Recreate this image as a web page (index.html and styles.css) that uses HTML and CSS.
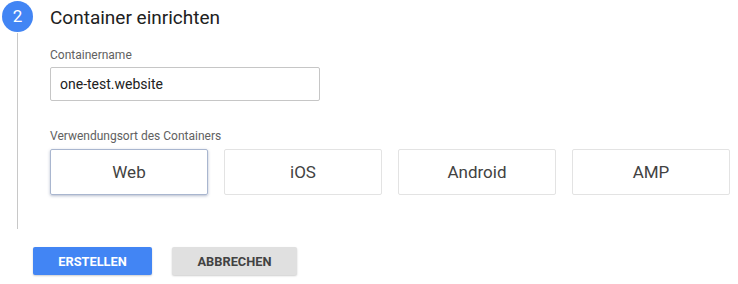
FILE: index.html
```html
<!DOCTYPE html>
<html lang="de">
<head>
<meta charset="utf-8">
<title>Container einrichten</title>
<link rel="stylesheet" href="styles.css">
</head>
<body>
<div class="page">
  <section class="step">
    <div class="rail">
      <div class="step-num">2</div>
      <div class="rail-line"></div>
    </div>
    <div class="step-body">
      <h2 class="step-title">Container einrichten</h2>
      <label class="field-label">Containername</label>
      <div class="text-input">one-test.website</div>
      <div class="field-label second">Verwendungsort des Containers</div>
      <div class="choices">
        <div class="choice selected">Web</div>
        <div class="choice">iOS</div>
        <div class="choice">Android</div>
        <div class="choice">AMP</div>
      </div>
    </div>
  </section>
  <div class="actions">
    <button class="btn btn-primary">ERSTELLEN</button>
    <button class="btn btn-secondary">ABBRECHEN</button>
  </div>
</div>
</body>
</html>
```
FILE: styles.css
```css
html, body {
  margin: 0;
  padding: 0;
  background: #ffffff;
  font-family: Roboto, "Liberation Sans", Arial, sans-serif;
  color: #212121;
}
.page {
  width: 738px;
  height: 284px;
  overflow: hidden;
}
.step {
  display: flex;
  padding-left: 2px;
}
.rail {
  width: 31px;
  display: flex;
  flex-direction: column;
  align-items: center;
  padding-top: 1px;
}
.step-num {
  width: 31px;
  height: 31px;
  border-radius: 50%;
  background: #4285f4;
  color: #ffffff;
  font-size: 17px;
  line-height: 31px;
  text-align: center;
}
.rail-line {
  width: 1px;
  height: 196px;
  margin-top: 1px;
  background: #c8c8c8;
}
.step-body {
  margin-left: 17px;
  padding-top: 6px;
  display: flex;
  flex-direction: column;
}
.step-title {
  margin: 0;
  font-size: 19px;
  line-height: 24px;
  font-weight: 400;
  color: #212121;
}
.field-label {
  display: block;
  margin-top: 17px;
  font-size: 12px;
  line-height: 16px;
  color: #616161;
}
.field-label.second {
  margin-top: 27px;
}
.text-input {
  margin-top: 4px;
  height: 32px;
  border: 1px solid #c6c6c6;
  border-radius: 2px;
  padding-left: 9px;
  box-sizing: content-box;
  width: 259px;
  font-size: 14px;
  line-height: 33px;
  color: #212121;
}
.choices {
  margin-top: 5px;
  display: flex;
  gap: 16px;
}
.choice {
  width: 156px;
  height: 44px;
  border: 1px solid #e3e3e3;
  border-radius: 2px;
  display: flex;
  align-items: center;
  justify-content: center;
  font-size: 17px;
  color: #424242;
}
.choice.selected {
  border-color: #a9b6cf;
  box-shadow: 0 1px 3px rgba(40, 60, 110, 0.35);
}
.actions {
  display: flex;
  gap: 20px;
  padding-left: 33px;
  margin-top: 18px;
}
.btn {
  height: 28px;
  border: none;
  border-radius: 2px;
  font-family: Roboto, "Liberation Sans", Arial, sans-serif;
  font-size: 12.8px;
  font-weight: 700;
  padding: 0;
  letter-spacing: 0;
}
.btn-primary {
  width: 119px;
  background: #4285f4;
  color: #ffffff;
  box-shadow: 0 1px 2px rgba(0, 0, 0, 0.2);
}
.btn-secondary {
  width: 125px;
  background: #e0e0e0;
  color: #424242;
  box-shadow: 0 1px 2px rgba(0, 0, 0, 0.2);
}
```
